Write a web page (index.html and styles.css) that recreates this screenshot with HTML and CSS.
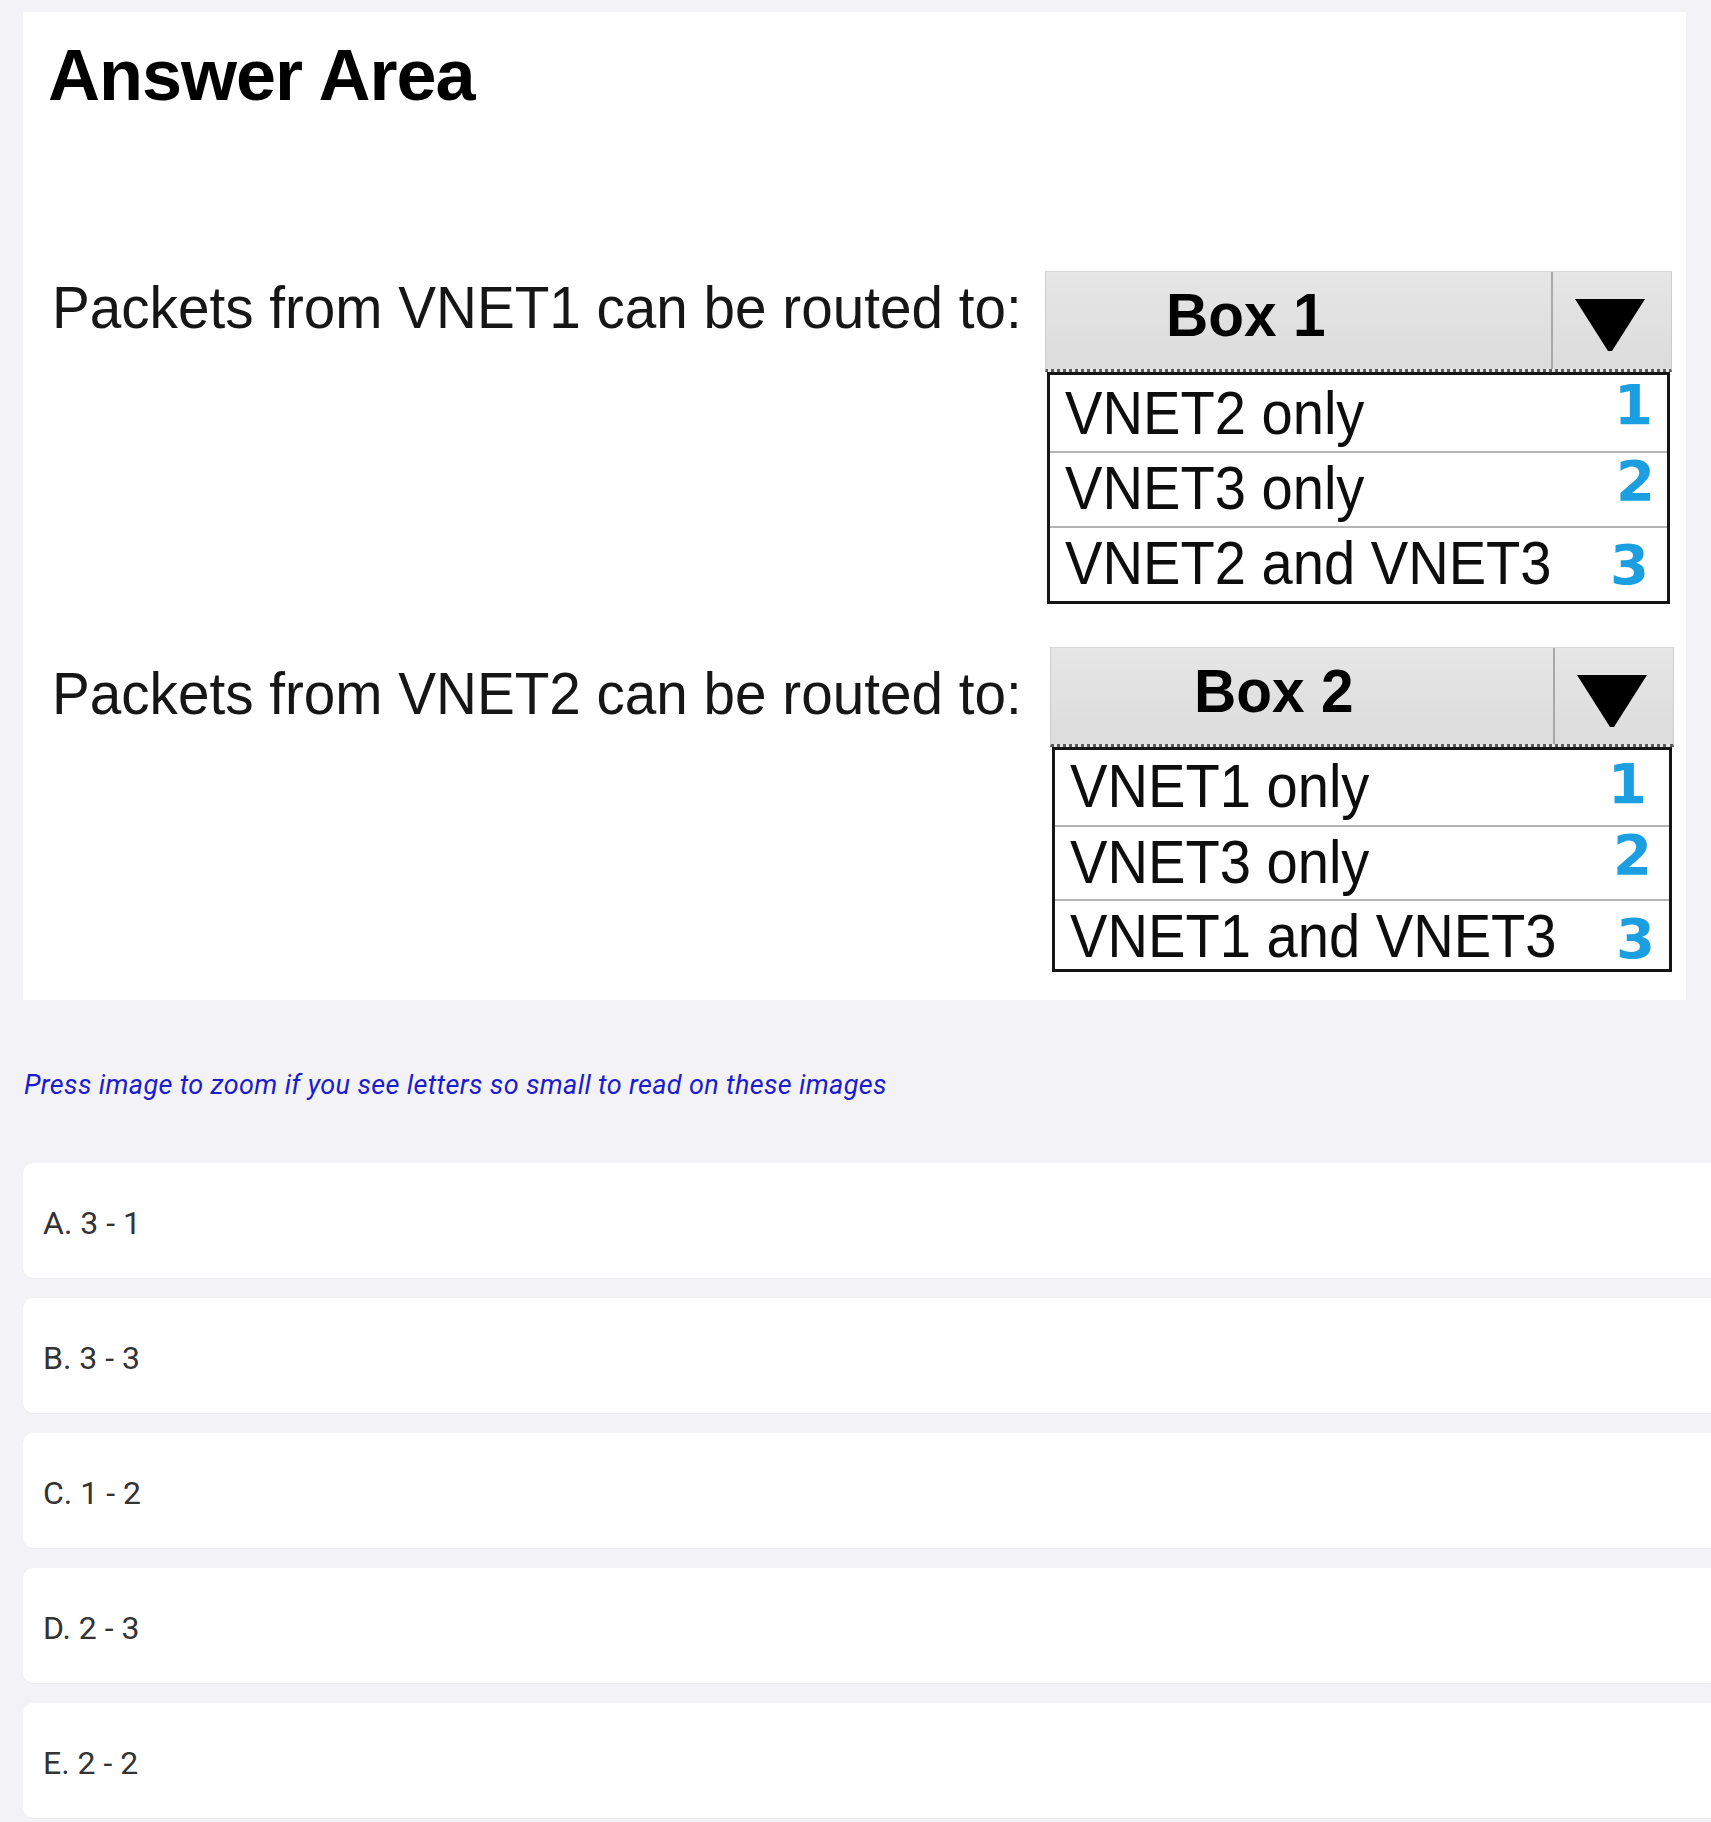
FILE: index.html
```html
<!DOCTYPE html>
<html lang="en">
<head>
<meta charset="utf-8">
<title>Answer Area</title>
<link rel="stylesheet" href="styles.css">
</head>
<body>
<div class="page">
  <section class="shot">
    <h1 class="shot-title">Answer Area</h1>

    <div class="q q--1">
      <div class="q-label"><span class="q-label-text">Packets from VNET1 can be routed to:</span></div>
      <div class="dd dd--1">
        <div class="dd-head">
          <div class="dd-title"><span class="dd-title-text">Box 1</span></div>
          <div class="dd-arrow">
            <svg width="70" height="52" viewBox="0 0 70 52"><polygon points="0,0 70,0 37,52 33,52" fill="#000"/></svg>
          </div>
        </div>
        <div class="dd-list">
          <div class="opt"><span class="opt-text">VNET2 only</span><span class="num">1</span></div>
          <div class="opt"><span class="opt-text">VNET3 only</span><span class="num">2</span></div>
          <div class="opt"><span class="opt-text">VNET2 and VNET3</span><span class="num">3</span></div>
        </div>
      </div>
    </div>

    <div class="q q--2">
      <div class="q-label"><span class="q-label-text">Packets from VNET2 can be routed to:</span></div>
      <div class="dd dd--2">
        <div class="dd-head">
          <div class="dd-title"><span class="dd-title-text">Box 2</span></div>
          <div class="dd-arrow">
            <svg width="70" height="52" viewBox="0 0 70 52"><polygon points="0,0 70,0 37,52 33,52" fill="#000"/></svg>
          </div>
        </div>
        <div class="dd-list">
          <div class="opt"><span class="opt-text">VNET1 only</span><span class="num">1</span></div>
          <div class="opt"><span class="opt-text">VNET3 only</span><span class="num">2</span></div>
          <div class="opt"><span class="opt-text">VNET1 and VNET3</span><span class="num">3</span></div>
        </div>
      </div>
    </div>
  </section>

  <p class="hint">Press image to zoom if you see letters so small to read on these images</p>

  <ul class="choices">
    <li class="choice">A. 3 - 1</li>
    <li class="choice">B. 3 - 3</li>
    <li class="choice">C. 1 - 2</li>
    <li class="choice">D. 2 - 3</li>
    <li class="choice">E. 2 - 2</li>
  </ul>
</div>
</body>
</html>
```

FILE: styles.css
```css
html, body {
  margin: 0;
  padding: 0;
  background: #f2f2f7;
}

.page {
  padding: 12px 0 0 23px;
}

/* ---------- screenshot card ---------- */
.shot {
  width: 1663px;
  box-sizing: border-box;
  background: #ffffff;
  padding: 27px 0 28px 25px;
  font-family: "Liberation Sans", Arial, sans-serif;
  color: #111;
}

.shot-title {
  margin: 0;
  font-size: 72px;
  line-height: 1;
  font-weight: 700;
  letter-spacing: -1px;
  color: #000;
}

.q {
  display: flex;
  align-items: flex-start;
}

.q--1 { margin-top: 160px; }
.q--2 { margin-top: 43px; }

.q-label {
  width: 993px;
  margin-left: 4px;
  flex: none;
  font-size: 60px;
  line-height: 1;
  color: #161616;
  white-space: nowrap;
}

.q-label-text {
  display: inline-block;
  transform: scaleX(0.944);
  transform-origin: left center;
}

.q--1 .q-label { padding-top: 7px; }
.q--2 .q-label { padding-top: 17px; }

.dd {
  flex: none;
  display: flex;
  flex-direction: column;
}

.dd--1 { width: 627px; }
.dd--2 { width: 624px; margin-left: 5px; }

.dd-head {
  display: flex;
  box-sizing: border-box;
  background: linear-gradient(#e6e6e6, #dcdcdc);
  border: 1px solid #cdcdcd;
  border-top-color: #d8d8d8;
  border-bottom: 3px dotted #5a5a5a;
}

.dd--1 .dd-head { height: 101px; }
.dd--2 .dd-head { height: 100px; }

.dd-title {
  flex: 1;
  font-size: 61px;
  line-height: 1;
  font-weight: 700;
  color: #000;
  padding-top: 13px;
}

.dd-title-text {
  display: inline-block;
  transform: scaleX(0.96);
  transform-origin: left center;
}

.dd--1 .dd-title { padding-left: 120px; }
.dd--2 .dd-title { padding-left: 143px; }

.dd-arrow {
  width: 120px;
  flex: none;
  border-left: 2px solid #a8a8a8;
  padding: 27px 0 0 22px;
  box-sizing: border-box;
}

.dd-arrow svg { display: block; }

.dd-list {
  margin: 0 2px;
  border: 3px solid #151515;
  background: #fff;
}

.opt {
  display: flex;
  justify-content: space-between;
  align-items: flex-start;
  box-sizing: border-box;
  padding: 5px 12px 0 15px;
  border-top: 2px solid #b4b4b4;
}

.opt:first-child { border-top: 0; }

.dd--1 .opt:nth-child(1) { height: 76px; }
.dd--1 .opt:nth-child(2) { height: 75px; }
.dd--1 .opt:nth-child(3) { height: 75px; }
.dd--2 .opt:nth-child(1) { height: 75px; }
.dd--2 .opt:nth-child(2) { height: 74px; }
.dd--2 .opt:nth-child(3) { height: 70px; }

.opt-text {
  display: inline-block;
  font-size: 61px;
  line-height: 1;
  color: #0d0d0d;
  white-space: nowrap;
  transform: scaleX(0.92);
  transform-origin: left center;
}

.dd--1 .opt:nth-child(1) .opt-text { margin-top: 3px; }
.dd--2 .opt:nth-child(1) .opt-text { margin-top: 1px; }

.num {
  font-family: "DejaVu Sans", sans-serif;
  font-weight: 700;
  font-size: 56px;
  line-height: 1;
  color: #1c9fe0;
}

.dd--1 .opt:nth-child(1) .num { margin-top: -3px; margin-right: 2px; }
.dd--1 .opt:nth-child(2) .num { margin-top: -5px; }
.dd--1 .opt:nth-child(3) .num { margin-top: 4px; margin-right: 6px; }
.dd--2 .opt:nth-child(1) .num { margin-top: 1px; margin-right: 10px; }
.dd--2 .opt:nth-child(2) .num { margin-top: -5px; margin-right: 5px; }
.dd--2 .opt:nth-child(3) .num { margin-top: 5px; margin-right: 2px; }

/* ---------- hint ---------- */
.hint {
  margin: 72px 0 0 0;
  padding-left: 1px;
  font-family: Roboto, "Noto Sans", sans-serif;
  font-style: italic;
  font-size: 27px;
  letter-spacing: 0.35px;
  line-height: 1;
  color: #1c1ccc;
}

/* ---------- choices ---------- */
.choices {
  list-style: none;
  margin: 64px 0 0 0;
  padding: 0;
}

.choice {
  height: 115px;
  box-sizing: border-box;
  margin-bottom: 20px;
  display: flex;
  align-items: center;
  padding: 4px 0 0 20px;
  background: #fff;
  border-radius: 10px 0 0 10px;
  box-shadow: 0 1px 1px rgba(0, 0, 0, 0.03);
  font-family: Roboto, "Noto Sans", sans-serif;
  font-size: 32px;
  line-height: 1;
  color: #333;
}
```
